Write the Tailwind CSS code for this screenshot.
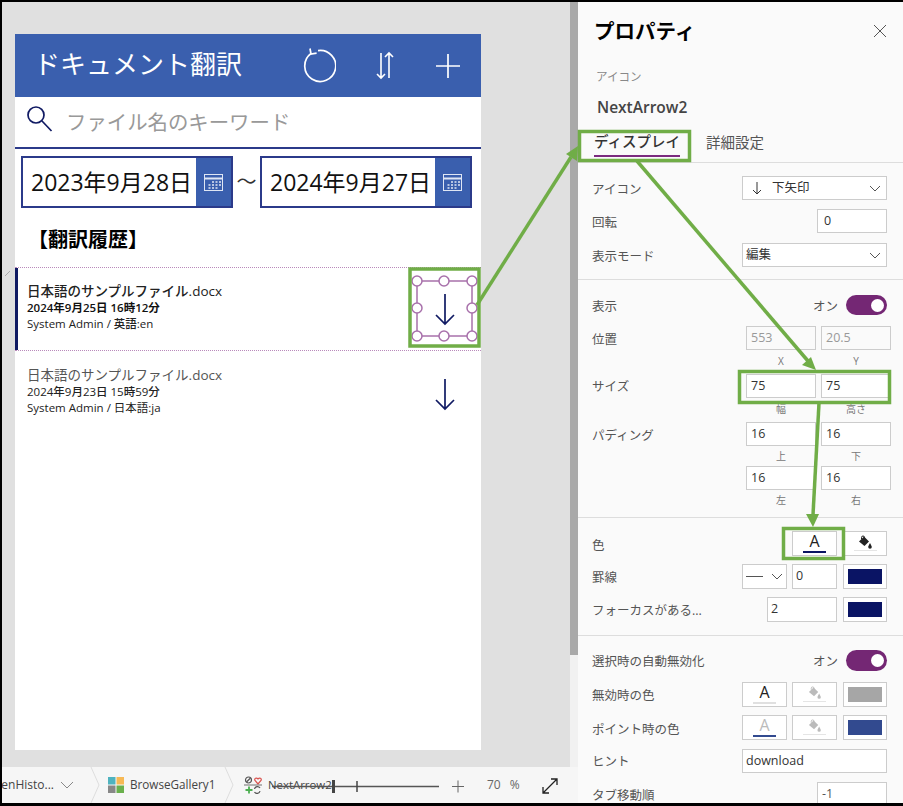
<!DOCTYPE html>
<html lang="ja">
<head>
    <meta charset="UTF-8">
    <title>ドキュメント翻訳</title>
    <script src="https://cdn.jsdelivr.net/npm/@tailwindcss/browser@4"></script>
</head>
<body class="bg-white">
<div class="relative w-[903px] h-[806px] overflow-hidden font-['Open_Sans','Noto_Sans_CJK_JP',sans-serif]">
    <div class="flex w-full h-full border-t-2 border-l-2 border-b-[3px] border-black">

        <!-- left: canvas + status bar -->
        <div class="flex flex-col w-[576px] shrink-0">
            <div class="flex flex-1 min-h-0">
                <div class="flex-1 bg-[#e0e0e0] pl-[13px] pt-[32px]">
                    <div class="w-[466px] h-[716px] bg-white flex flex-col">
                        <!-- app header -->
                        <div class="h-[63px] bg-[#3a5fae] flex items-center pl-[19px] text-white shrink-0">
                            <span class="text-[26px] leading-none w-[266px] -mt-[4px]">ドキュメント翻訳</span>
                            <svg class="w-[36px] h-[36px]" viewBox="0 0 36 36" fill="none" stroke="#fff" stroke-width="1.7"><path d="M11 5.500A15.500 15.500 0 1 0 18 2.600"/><path d="M10 .5 11 6l5.600-.8"/></svg>
                            <svg class="w-[20px] h-[30px] ml-[39px]" viewBox="0 0 20 30" fill="none" stroke="#fff" stroke-width="1.6"><path d="M6 2v25M2 23l4 4 4-4"/><path d="M14 27V2M10 6l4-4 4 4"/></svg>
                            <svg class="w-[26px] h-[26px] ml-[40px]" viewBox="0 0 26 26" fill="none" stroke="#fff" stroke-width="1.7"><path d="M13 1v24M1 13h24"/></svg>
                        </div>
                        <!-- search -->
                        <div class="h-[52px] border-b-2 border-[#2b3a8a] flex items-center pl-[10px] shrink-0">
                            <svg class="w-[28px] h-[28px] -mt-[6px]" viewBox="0 0 28 28" fill="none" stroke="#101a63" stroke-width="1.7"><circle cx="11" cy="10" r="8"/><path d="M17 16l9.500 10"/></svg>
                            <span class="text-[20.400px] leading-none text-[#999] ml-[13px]">ファイル名のキーワード</span>
                        </div>
                        <!-- date pickers -->
                        <div class="flex pt-[7px] pl-[6px] shrink-0">
                            <div class="flex w-[212px] h-[52px] border-2 border-[#2b3a8a]">
                                <div class="flex-1 flex items-center pl-[8px] text-[23px] leading-none text-[#111] whitespace-nowrap">2023年9月28日</div>
                                <div class="w-[35px] bg-[#3a5fae] flex items-center justify-center">
                                    <svg class="w-[19px] h-[17px]" viewBox="0 0 19 17" fill="none" stroke="#dfe6f4" stroke-width="1"><rect x=".5" y=".5" width="18" height="16"/><path d="M.5 4.500h18" stroke-width="2"/><path d="M8 8h2M11.500 8h2M15 8h2M4.500 11h2M8 11h2M11.500 11h2M15 11h2M4.500 14h2M8 14h2M11.500 14h2" stroke-width="1.500"/></svg>
                                </div>
                            </div>
                            <div class="w-[27px] h-[52px] flex items-center justify-center text-[20px] text-[#333]">～</div>
                            <div class="flex w-[212px] h-[52px] border-2 border-[#2b3a8a]">
                                <div class="flex-1 flex items-center pl-[8px] text-[23px] leading-none text-[#111] whitespace-nowrap">2024年9月27日</div>
                                <div class="w-[35px] bg-[#3a5fae] flex items-center justify-center">
                                    <svg class="w-[19px] h-[17px]" viewBox="0 0 19 17" fill="none" stroke="#dfe6f4" stroke-width="1"><rect x=".5" y=".5" width="18" height="16"/><path d="M.5 4.500h18" stroke-width="2"/><path d="M8 8h2M11.500 8h2M15 8h2M4.500 11h2M8 11h2M11.500 11h2M15 11h2M4.500 14h2M8 14h2M11.500 14h2" stroke-width="1.500"/></svg>
                                </div>
                            </div>
                        </div>
                        <div class="h-[59px] pt-[4px] pl-[13px] flex items-center text-[20px] font-bold text-black shrink-0">【翻訳履歴】</div>
                        <!-- gallery -->
                        <div class="h-[84px] flex items-center justify-between border-y border-dotted border-[#b98abb] pl-[9px] pr-[24px] relative shrink-0">
                            <div class="absolute left-0 top-0 bottom-0 w-[3px] bg-[#101a63]"></div>
                            <div class="pl-[3px] -mt-[4px]">
                                <div class="text-[13.500px] leading-[17px] font-medium text-[#222]">日本語のサンプルファイル.docx</div>
                                <div class="text-[11.500px] leading-[16px] font-semibold text-[#111]">2024年9月25日 16時12分</div>
                                <div class="text-[11.500px] leading-[16px] font-medium text-[#222]">System Admin / 英語:en</div>
                            </div>
                            <svg class="w-[24px] h-[34px]" viewBox="0 0 24 34" fill="none" stroke="#101a63" stroke-width="1.700"><path d="M12 2v30M3 23l9 9 9-9"/></svg>
                        </div>
                        <div class="h-[82px] flex items-start justify-between pl-[9px] pr-[24px] shrink-0">
                            <div class="pl-[3px] pt-[16px]">
                                <div class="text-[13.500px] leading-[17px] text-[#555]">日本語のサンプルファイル.docx</div>
                                <div class="text-[11.500px] leading-[16px] font-medium text-[#222]">2024年9月23日 15時59分</div>
                                <div class="text-[11.500px] leading-[16px] text-[#222]">System Admin / 日本語:ja</div>
                            </div>
                            <svg class="w-[24px] h-[34px] mt-[26px]" viewBox="0 0 24 34" fill="none" stroke="#101a63" stroke-width="1.700"><path d="M12 2v30M3 23l9 9 9-9"/></svg>
                        </div>
                    </div>
                </div>
                <!-- scrollbar -->
                <div class="w-[8px] bg-[#f1f1f1] flex flex-col shrink-0">
                    <div class="h-[653px] bg-[#a9a9a9]"></div>
                </div>
            </div>
            <!-- status bar -->
            <div class="h-[36px] bg-[#f6f6f6] flex items-center text-[12px] text-[#444] shrink-0 overflow-hidden whitespace-nowrap">
                <span class="w-[52px] flex justify-end">enHisto...</span>
                <svg class="w-[14px] h-[8px] ml-[6px]" viewBox="0 0 14 8" fill="none" stroke="#888" stroke-width="1"><path d="M1 1l6 6 6-6"/></svg>
                <svg class="w-[10px] h-[36px] ml-[16px]" viewBox="0 0 10 36" fill="none" stroke="#ddd" stroke-width="1"><path d="M1 0l8 18-8 18"/></svg>
                <svg class="w-[16px] h-[16px] ml-[8px]" viewBox="0 0 16 16"><rect width="7.500" height="7.500" fill="#4fb3bf"/><rect x="8.500" width="7.500" height="7.500" fill="#f7b955"/><rect y="8.500" width="7.500" height="7.500" fill="#888"/><rect x="8.500" y="8.500" width="7.500" height="7.500" fill="#6ab04c"/></svg>
                <span class="ml-[6px] w-[84px] text-[11.700px]">BrowseGallery1</span>
                <svg class="w-[10px] h-[36px] ml-[10px]" viewBox="0 0 10 36" fill="none" stroke="#ddd" stroke-width="1"><path d="M1 0l8 18-8 18"/></svg>
                <svg class="w-[18px] h-[18px] ml-[10px]" viewBox="0 0 18 18" fill="none" stroke-width="1.200"><circle cx="4.500" cy="4" r="3" stroke="#555"/><path d="M2.500 6l4-4" stroke="#555"/><path d="M14 8l-3-3.500c-1-2 1.500-3.500 3-1.500 1.500-2 4-.5 3 1.500z" stroke="#d9534f"/><path d="M0 9h18" stroke="#888"/><path d="M5 10.500v7M1.500 14h7" stroke="#4caf50" stroke-width="1.800"/><path d="M10.500 13a3 3 0 0 1 5.500-1M16 15a3 3 0 0 1-5.500 1" stroke="#555"/></svg>
                <span class="ml-[6px] w-[64px] text-[11.400px]">NextArrow2</span>
                <span class="ml-[155px] text-[#666]">70</span>
                <span class="ml-[9px] text-[#666]">%</span>
            </div>
        </div>

        <!-- properties panel -->
        <div class="flex-1 min-w-0 bg-[#fafafa] text-[12.500px] text-[#555] overflow-hidden">
            <div class="h-[58px] flex items-center justify-between pl-[16px] pr-[16px]">
                <span class="text-[20.500px] font-bold text-black">プロパティ</span>
                <svg class="w-[14px] h-[14px]" viewBox="0 0 14 14" fill="none" stroke="#555" stroke-width="1"><path d="M1 1l12 12M13 1L1 13"/></svg>
            </div>
            <div class="h-[34px] flex items-center pl-[18px] text-[11.500px] text-[#888]">アイコン</div>
            <div class="h-[28px] flex items-center pl-[19px] text-[15.500px] font-semibold text-[#444]">NextArrow2</div>
            <div class="h-[41px] border-b border-[#ddd] flex pl-[16px] text-[14.500px]">
                <div class="h-[35px] pt-[6px] flex items-center border-b-2 border-[#7b2a7f] font-medium text-[#333]">ディスプレイ</div>
                <div class="h-[35px] pt-[6px] flex items-center ml-[26px] text-[#555]">詳細設定</div>
            </div>

            <div class="pl-[14px] pt-[13px] pb-[12px] border-b border-[#ddd]">
                <div class="flex items-center h-[24px]">
                    <span class="w-[150px] mt-[4px]">アイコン</span>
                    <div class="w-[145px] h-full bg-white border border-[#ccc] flex items-center justify-between pl-[9px] pr-[5px] text-[#333]">
                        <span class="flex items-center gap-[10px]"><svg class="w-[10px] h-[14px]" viewBox="0 0 10 14" fill="none" stroke="#333" stroke-width="1"><path d="M5 1v12M1 9l4 4 4-4"/></svg>下矢印</span>
                        <svg class="w-[12px] h-[7px]" viewBox="0 0 12 7" fill="none" stroke="#555" stroke-width="1"><path d="M1 1l5 5 5-5"/></svg>
                    </div>
                </div>
                <div class="flex items-center h-[24px] mt-[9px]">
                    <span class="w-[225px] mt-[4px]">回転</span>
                    <div class="w-[70px] h-full bg-white border border-[#ccc] flex items-center pl-[6px] text-[#333]">0</div>
                </div>
                <div class="flex items-center h-[24px] mt-[10px]">
                    <span class="w-[150px] mt-[4px]">表示モード</span>
                    <div class="w-[145px] h-full bg-white border border-[#ccc] flex items-center justify-between pl-[3px] pr-[5px] text-[#333]">
                        <span>編集</span>
                        <svg class="w-[12px] h-[7px]" viewBox="0 0 12 7" fill="none" stroke="#555" stroke-width="1"><path d="M1 1l5 5 5-5"/></svg>
                    </div>
                </div>
            </div>

            <div class="pl-[14px] pt-[15px] h-[238px] border-b border-[#ddd]">
                <div class="flex items-center h-[20px]">
                    <span class="w-[221px] mt-[4px]">表示</span>
                    <span class="w-[33px] mt-[4px]">オン</span>
                    <div class="w-[41px] h-[20px] rounded-full bg-[#742774] flex items-center justify-end pr-[3px]"><div class="w-[13px] h-[13px] rounded-full bg-white"></div></div>
                </div>
                <div class="flex mt-[11px]">
                    <span class="w-[154px] h-[24px] pt-[5px] flex items-center">位置</span>
                    <div class="flex gap-[5px]">
                        <div class="w-[70px]"><div class="h-[24px] border border-[#ccc] flex items-center pl-[4px] text-[#999]">553</div><div class="h-[22px] flex items-center justify-center text-[10px] text-[#777]">X</div></div>
                        <div class="w-[70px]"><div class="h-[24px] border border-[#ccc] flex items-center pl-[4px] text-[#999]">20.5</div><div class="h-[22px] flex items-center justify-center text-[10px] text-[#777]">Y</div></div>
                    </div>
                </div>
                <div class="flex mt-[2px]">
                    <span class="w-[154px] h-[24px] pt-[3px] flex items-center">サイズ</span>
                    <div class="flex gap-[5px]">
                        <div class="w-[70px]"><div class="h-[24px] bg-white border border-[#ccc] flex items-center pl-[4px] text-[#333]">75</div><div class="h-[22px] flex items-center justify-center text-[10px] text-[#777]">幅</div></div>
                        <div class="w-[70px]"><div class="h-[24px] bg-white border border-[#ccc] flex items-center pl-[4px] text-[#333]">75</div><div class="h-[22px] flex items-center justify-center text-[10px] text-[#777]">高さ</div></div>
                    </div>
                </div>
                <div class="flex mt-[2px]">
                    <span class="w-[154px] h-[24px] pt-[4px] flex items-center">パディング</span>
                    <div class="grid grid-cols-[70px_70px] gap-x-[5px]">
                        <div><div class="h-[24px] bg-white border border-[#ccc] flex items-center pl-[4px] text-[#333]">16</div><div class="h-[20px] flex items-center justify-center text-[10px] text-[#777]">上</div></div>
                        <div><div class="h-[24px] bg-white border border-[#ccc] flex items-center pl-[4px] text-[#333]">16</div><div class="h-[20px] flex items-center justify-center text-[10px] text-[#777]">下</div></div>
                        <div><div class="h-[24px] bg-white border border-[#ccc] flex items-center pl-[4px] text-[#333]">16</div><div class="h-[20px] flex items-center justify-center text-[10px] text-[#777]">左</div></div>
                        <div><div class="h-[24px] bg-white border border-[#ccc] flex items-center pl-[4px] text-[#333]">16</div><div class="h-[20px] flex items-center justify-center text-[10px] text-[#777]">右</div></div>
                    </div>
                </div>
            </div>

            <div class="pl-[14px] pt-[13px] pb-[13px] border-b border-[#ddd]">
                <div class="flex items-center h-[25px]">
                    <span class="w-[200px] mt-[5px]">色</span>
                    <div class="w-[45px] h-full bg-white border border-[#ccc] flex flex-col items-center text-[#222] text-[16px] leading-[19px]"><span>A</span><div class="w-[23px] h-[2px] bg-[#0a1464]"></div></div>
                    <div class="w-[44px] h-full ml-[6px] bg-white border border-[#ccc] flex flex-col items-center">
                        <svg class="w-[14px] h-[14px] mt-[3px]" viewBox="0 0 14 14"><path d="M1 6.500l5-5 5 5-4.500 4.500z" fill="#222"/><path d="M3.500 4V2.500a1.500 1.500 0 0 1 3 0V5" fill="none" stroke="#222"/><path d="M12 8c1 2 1.800 3 1.800 4a1.800 1.800 0 0 1-3.600 0c0-1 .8-2 1.800-4z" fill="#222"/></svg>
                        <div class="w-[23px] h-[1px] mt-[1px] bg-[#e5e5e5]"></div>
                    </div>
                </div>
                <div class="flex items-center h-[25px] mt-[8px]">
                    <span class="w-[150px] mt-[4px]">罫線</span>
                    <div class="w-[45px] h-full bg-white border border-[#ccc] flex items-center justify-between px-[3px]">
                        <div class="w-[17px] h-[1px] bg-[#555]"></div>
                        <svg class="w-[12px] h-[7px]" viewBox="0 0 12 7" fill="none" stroke="#555" stroke-width="1"><path d="M1 1l5 5 5-5"/></svg>
                    </div>
                    <div class="w-[45px] h-full ml-[5px] bg-white border border-[#ccc] flex items-center pl-[3px] text-[#333]">0</div>
                    <div class="w-[44px] h-full ml-[6px] bg-white border border-[#ccc] p-[4px]"><div class="h-full bg-[#0a1464]"></div></div>
                </div>
                <div class="flex items-center h-[25px] mt-[8px]">
                    <span class="w-[175px] mt-[4px]">フォーカスがある...</span>
                    <div class="w-[70px] h-full bg-white border border-[#ccc] flex items-center pl-[3px] text-[#333]">2</div>
                    <div class="w-[44px] h-full ml-[6px] bg-white border border-[#ccc] p-[4px]"><div class="h-full bg-[#0a1464]"></div></div>
                </div>
            </div>

            <div class="pl-[14px] pt-[14px]">
                <div class="flex items-center h-[21px]">
                    <span class="w-[221px] mt-[4px]">選択時の自動無効化</span>
                    <span class="w-[33px] mt-[4px]">オン</span>
                    <div class="w-[41px] h-[21px] rounded-full bg-[#742774] flex items-center justify-end pr-[3px]"><div class="w-[13px] h-[13px] rounded-full bg-white"></div></div>
                </div>
                <div class="flex items-center h-[25px] mt-[11px]">
                    <span class="w-[150px] mt-[4px]">無効時の色</span>
                    <div class="w-[45px] h-full bg-white border border-[#ccc] flex flex-col items-center text-[#222] text-[16px] leading-[19px]"><span>A</span><div class="w-[23px] h-[2px] bg-[#e0e0e0]"></div></div>
                    <div class="w-[45px] h-full ml-[5px] bg-white border border-[#ccc] flex flex-col items-center">
                        <svg class="w-[13px] h-[13px] mt-[3px]" viewBox="0 0 14 14"><path d="M1 6.500l5-5 5 5-4.500 4.500z" fill="#bbb"/><path d="M3.500 4V2.500a1.500 1.500 0 0 1 3 0V5" fill="none" stroke="#bbb"/><path d="M12 8c1 2 1.800 3 1.800 4a1.800 1.800 0 0 1-3.600 0c0-1 .8-2 1.800-4z" fill="#bbb"/></svg>
                        <div class="w-[23px] h-[1px] mt-[2px] bg-[#e5e5e5]"></div>
                    </div>
                    <div class="w-[44px] h-full ml-[6px] bg-white border border-[#ccc] p-[4px]"><div class="h-full bg-[#a6a6a6]"></div></div>
                </div>
                <div class="flex items-center h-[25px] mt-[8px]">
                    <span class="w-[150px] mt-[5px]">ポイント時の色</span>
                    <div class="w-[45px] h-full bg-white border border-[#ccc] flex flex-col items-center text-[#bbb] text-[16px] leading-[19px]"><span>A</span><div class="w-[23px] h-[2px] bg-[#324a8f]"></div></div>
                    <div class="w-[45px] h-full ml-[5px] bg-white border border-[#ccc] flex flex-col items-center">
                        <svg class="w-[13px] h-[13px] mt-[3px]" viewBox="0 0 14 14"><path d="M1 6.500l5-5 5 5-4.500 4.500z" fill="#bbb"/><path d="M3.500 4V2.500a1.500 1.500 0 0 1 3 0V5" fill="none" stroke="#bbb"/><path d="M12 8c1 2 1.800 3 1.800 4a1.800 1.800 0 0 1-3.600 0c0-1 .8-2 1.800-4z" fill="#bbb"/></svg>
                        <div class="w-[23px] h-[1px] mt-[2px] bg-[#e5e5e5]"></div>
                    </div>
                    <div class="w-[44px] h-full ml-[6px] bg-white border border-[#ccc] p-[4px]"><div class="h-full bg-[#324a8f]"></div></div>
                </div>
                <div class="flex items-center h-[24px] mt-[9px]">
                    <span class="w-[150px] mt-[3px]">ヒント</span>
                    <div class="w-[145px] h-full bg-white border border-[#ccc] flex items-center pl-[3px] text-[#333]">download</div>
                </div>
                <div class="flex items-center h-[24px] mt-[9px]">
                    <span class="w-[225px] mt-[4px]">タブ移動順</span>
                    <div class="w-[70px] h-full bg-white border border-[#ccc] flex items-center pl-[4px] text-[#555]">-1</div>
                </div>
            </div>
        </div>
    </div>

    <!-- zoom slider over the status bar -->
    <svg class="absolute left-0 top-0 w-[903px] h-[806px] pointer-events-none" viewBox="0 0 903 806" fill="none">
        <path d="M272 786.500h167" stroke="#555" stroke-width="1.500"/>
        <path d="M333.500 780v13" stroke="#444" stroke-width="3"/>
        <path d="M357 781v11" stroke="#444" stroke-width="1.500"/>
        <path d="M452 786.500h12M458 780.500v12" stroke="#666" stroke-width="1"/>
        <path d="M543 793l14-14M543 787v6h6M551 779h6v6" stroke="#222" stroke-width="1.300"/>
        <path d="M5 276l5-5" stroke="#aaa" stroke-width="1"/>

        <!-- selection handles -->
        <rect x="417" y="281" width="55" height="55" stroke="#a871ab" stroke-width="1.500"/>
        <g fill="#fff" stroke="#a871ab" stroke-width="1.500">
            <circle cx="417" cy="281" r="5"/><circle cx="444" cy="281" r="5"/><circle cx="472" cy="281" r="5"/>
            <circle cx="417" cy="308" r="5"/><circle cx="472" cy="308" r="5"/>
            <circle cx="417" cy="336" r="5"/><circle cx="444" cy="336" r="5"/><circle cx="472" cy="336" r="5"/>
        </g>

        <!-- green annotations -->
        <g stroke="#70ad47" stroke-width="3.500">
            <rect x="579.500" y="131.500" width="110" height="29"/>
            <rect x="410" y="269" width="69" height="77"/>
            <rect x="739.500" y="371.500" width="150" height="31"/>
            <rect x="783.500" y="528.500" width="60" height="30"/>
            <path d="M477 305l94-148"/>
            <path d="M637 161l171 200"/>
            <path d="M819 403l-6 112"/>
        </g>
        <g fill="#70ad47">
            <path d="M578 146l-1 15-11-7z"/>
            <path d="M816 370l-14-5 9-8z"/>
            <path d="M813 527l-7-13h13z"/>
        </g>
    </svg>
</div>
</body>
</html>
